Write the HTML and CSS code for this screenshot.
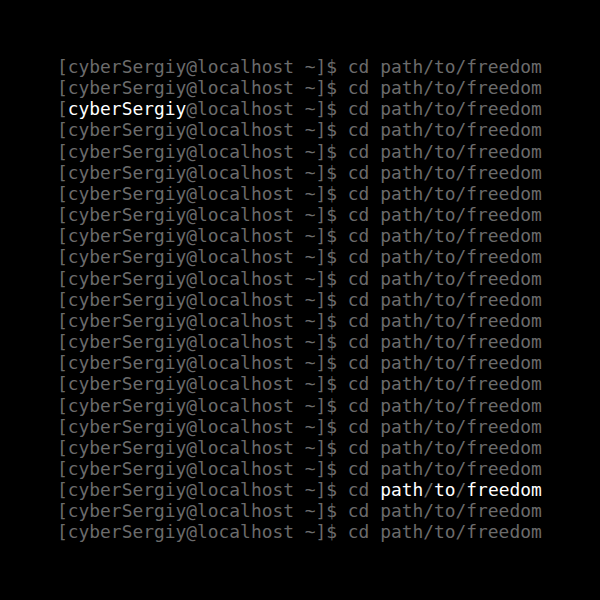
FILE: index.html
```html
<!DOCTYPE html>
<html>
<head>
<meta charset="utf-8">
<link rel="stylesheet" href="styles.css">
</head>
<body>
<div class="term">
<div class="line">[cyberSergiy@localhost ~]$ cd path/to/freedom</div>
<div class="line">[cyberSergiy@localhost ~]$ cd path/to/freedom</div>
<div class="line">[<span class="hi">cyberSergiy</span>@localhost ~]$ cd path/to/freedom</div>
<div class="line">[cyberSergiy@localhost ~]$ cd path/to/freedom</div>
<div class="line">[cyberSergiy@localhost ~]$ cd path/to/freedom</div>
<div class="line">[cyberSergiy@localhost ~]$ cd path/to/freedom</div>
<div class="line">[cyberSergiy@localhost ~]$ cd path/to/freedom</div>
<div class="line">[cyberSergiy@localhost ~]$ cd path/to/freedom</div>
<div class="line">[cyberSergiy@localhost ~]$ cd path/to/freedom</div>
<div class="line">[cyberSergiy@localhost ~]$ cd path/to/freedom</div>
<div class="line">[cyberSergiy@localhost ~]$ cd path/to/freedom</div>
<div class="line">[cyberSergiy@localhost ~]$ cd path/to/freedom</div>
<div class="line">[cyberSergiy@localhost ~]$ cd path/to/freedom</div>
<div class="line">[cyberSergiy@localhost ~]$ cd path/to/freedom</div>
<div class="line">[cyberSergiy@localhost ~]$ cd path/to/freedom</div>
<div class="line">[cyberSergiy@localhost ~]$ cd path/to/freedom</div>
<div class="line">[cyberSergiy@localhost ~]$ cd path/to/freedom</div>
<div class="line">[cyberSergiy@localhost ~]$ cd path/to/freedom</div>
<div class="line">[cyberSergiy@localhost ~]$ cd path/to/freedom</div>
<div class="line">[cyberSergiy@localhost ~]$ cd path/to/freedom</div>
<div class="line">[cyberSergiy@localhost ~]$ cd <span class="hi">path</span>/<span class="hi">to</span>/<span class="hi">freedom</span></div>
<div class="line">[cyberSergiy@localhost ~]$ cd path/to/freedom</div>
<div class="line">[cyberSergiy@localhost ~]$ cd path/to/freedom</div>
</div>
</body>
</html>
```
FILE: styles.css
```css
html, body {
  margin: 0;
  padding: 0;
  background: #000;
  width: 600px;
  height: 600px;
  overflow: hidden;
}
.term {
  padding: 56px 0 0 57px;
  font-family: "DejaVu Sans Mono", monospace;
  font-size: 17.9px;
  line-height: 21.15px;
  color: #6b6b6b;
}
.line {
  white-space: pre;
}
.hi {
  color: #ffffff;
}
```
